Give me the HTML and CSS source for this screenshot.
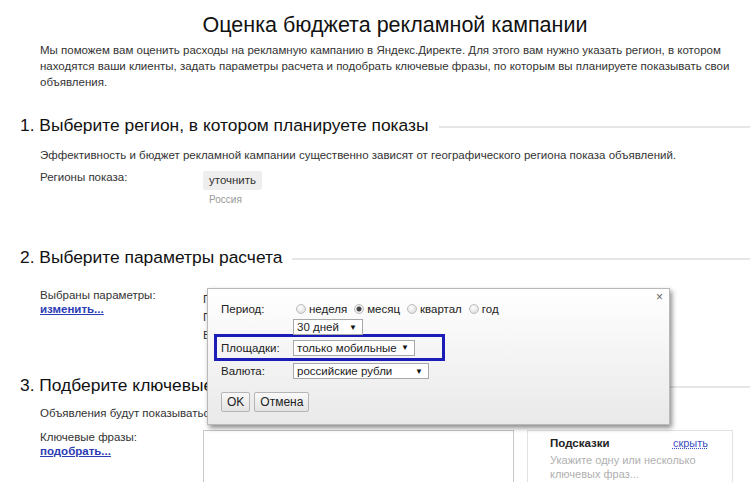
FILE: index.html
```html
<!DOCTYPE html>
<html lang="ru">
<head>
<meta charset="utf-8">
<title>Оценка бюджета рекламной кампании</title>
<link rel="stylesheet" href="styles.css">
</head>
<body>
<div class="page">
  <h1 class="title">Оценка бюджета рекламной кампании</h1>
  <p class="intro">Мы поможем вам оценить расходы на рекламную кампанию в Яндекс.Директе. Для этого вам нужно указать регион, в котором<br>находятся ваши клиенты, задать параметры расчета и подобрать ключевые фразы, по которым вы планируете показывать свои<br>объявления.</p>

  <h2 class="sec s1">1. Выберите регион, в котором планируете показы</h2>
  <p class="txt t1">Эффективность и бюджет рекламной кампании существенно зависят от географического региона показа объявлений.</p>
  <div class="row regions">
    <div class="lbl">Регионы показа:</div>
    <div class="val">
      <span class="btn-gray">уточнить</span>
      <div class="country">Россия</div>
    </div>
  </div>

  <h2 class="sec s2">2. Выберите параметры расчета</h2>
  <div class="row params">
    <div class="lbl">Выбраны параметры:<br><a class="link" href="#">изменить...</a></div>
    <div class="val plist">
      <div>Период: месяц</div>
      <div>Площадки: только мобильные</div>
      <div>Валюта: российские рубли</div>
    </div>
  </div>

  <h2 class="sec s3">3. Подберите ключевые фразы</h2>
  <p class="txt t3">Объявления будут показываться по ключевым фразам, которые вы укажете.</p>
  <div class="row kw">
    <div class="lbl">Ключевые фразы:<br><a class="link" href="#">подобрать...</a></div>
    <div class="val kwval">
      <div class="area"></div>
      <div class="hints">
        <div class="hints-head"><b>Подсказки</b><a class="hide" href="#">скрыть</a></div>
        <div class="hints-text">Укажите одну или несколько<br>ключевых фраз...</div>
      </div>
    </div>
  </div>

  <div class="dialog">
    <span class="close">×</span>
    <div class="drow period">
      <span class="dlbl">Период:</span>
      <span class="radios">
        <span class="radio"></span><span class="rt">неделя</span>
        <span class="radio on"></span><span class="rt">месяц</span>
        <span class="radio"></span><span class="rt">квартал</span>
        <span class="radio"></span><span class="rt">год</span>
      </span>
    </div>
    <div class="drow sub">
      <span class="dlbl"></span>
      <span class="sel w70">30 дней<i>▼</i></span>
    </div>
    <div class="drow hl">
      <span class="dlbl">Площадки:</span>
      <span class="sel w122">только мобильные<i>▼</i></span>
    </div>
    <div class="drow cur">
      <span class="dlbl">Валюта:</span>
      <span class="sel w136">российские рубли<i>▼</i></span>
    </div>
    <div class="drow btns">
      <span class="dbtn">OK</span>
      <span class="dbtn">Отмена</span>
    </div>
  </div>
</div>
</body>
</html>
```

FILE: styles.css
```css
html, body {
  margin: 0;
  padding: 0;
  background: #fff;
}
body {
  width: 750px;
  height: 482px;
  overflow: hidden;
  font-family: Arial, "Liberation Sans", sans-serif;
  color: #222;
}
.page {
  position: relative;
  padding-left: 20px;
}
.title {
  margin: 0 0 0 20px;
  padding-top: 12px;
  font-size: 21.5px;
  line-height: 26px;
  font-weight: normal;
  text-align: center;
  color: #111;
}
.intro {
  margin: 4px 0 0 20px;
  font-size: 11.5px;
  line-height: 16px;
  color: #333;
  white-space: nowrap;
}
.sec {
  display: flex;
  align-items: center;
  margin: 0;
  font-size: 17.4px;
  line-height: 22px;
  font-weight: normal;
  color: #111;
  white-space: nowrap;
}
.sec::after {
  content: "";
  flex: 1;
  height: 0;
  border-top: 2px solid #e6e6e6;
  margin-left: 10px;
  margin-top: 3px;
}
.s1 { margin-top: 24px; }
.s2 { margin-top: 39px; }
.s3 { margin-top: 30px; }
.txt {
  margin: 11px 0 0 20px;
  font-size: 11.5px;
  line-height: 16px;
  color: #333;
  white-space: nowrap;
}
.t3 { margin-top: 9px; }
.row {
  display: flex;
  margin-left: 20px;
  font-size: 11.5px;
  color: #333;
}
.lbl {
  width: 163px;
  flex: none;
}
.regions { margin-top: 6px; line-height: 16px; }
.btn-gray {
  display: inline-block;
  margin-top: 2px;
  padding: 2px 6px;
  line-height: 15px;
  background: #eeeeee;
  border-radius: 2px;
  color: #333;
}
.country {
  margin: 3px 0 0 6px;
  font-size: 10px;
  line-height: 14px;
  color: #999;
}
.params {
  margin-top: 20px;
  line-height: 14px;
}
.link {
  color: #2a3bb5;
  font-weight: bold;
  text-decoration: underline;
}
.plist {
  line-height: 18px;
  margin-top: 2px;
  white-space: nowrap;
}
.kw {
  margin-top: 9px;
  line-height: 14px;
}
.kwval {
  display: flex;
  gap: 13px;
}
.area {
  width: 309px;
  height: 70px;
  border: 1px solid #c8c8c8;
  background: #fff;
}
.hints {
  width: 158px;
  height: 70px;
  border: 1px solid #e2e2e2;
  padding: 5px 24px 0 22px;
}
.hints-head {
  display: flex;
  justify-content: space-between;
  align-items: baseline;
  color: #222;
}
.hide {
  color: #3a4fc0;
  text-decoration: underline dotted;
  font-size: 11px;
}
.hints-text {
  margin-top: 3px;
  font-size: 11px;
  color: #b0b0b0;
  line-height: 14px;
  white-space: nowrap;
}

/* popup dialog */
.dialog {
  position: absolute;
  left: 207px;
  top: 288px;
  width: 448px;
  height: 123px;
  padding: 12px 0 0 13px;
  border: 1px solid #b9b9b9;
  background: linear-gradient(#ffffff, #e9e9e9);
  box-shadow: 2px 3px 5px rgba(0, 0, 0, 0.45);
  font-size: 11.5px;
  color: #222;
  white-space: nowrap;
}
.close {
  position: absolute;
  right: 6px;
  top: 1px;
  font-size: 12px;
  color: #666;
}
.drow {
  display: flex;
  align-items: center;
}
.dlbl {
  width: 72px;
  flex: none;
}
.period { height: 16px; }
.radios {
  display: flex;
  align-items: center;
  margin-left: 3px;
}
.radio {
  width: 10px;
  height: 10px;
  border-radius: 50%;
  border: 1px solid #bdbdbd;
  background: radial-gradient(circle at 40% 35%, #ffffff, #d5d5d5);
  margin-right: 3px;
  box-sizing: border-box;
}
.radio.on {
  background: radial-gradient(circle, #444 0 2px, #f4f4f4 3px, #d6d6d6);
}
.rt { margin-right: 7px; }
.sub { margin-top: 2px; }
.sel {
  display: inline-flex;
  justify-content: space-between;
  align-items: center;
  box-sizing: border-box;
  height: 16px;
  padding: 0 5px 0 3px;
  border: 1px solid #a8a8a8;
  background: #fff;
  color: #222;
}
.sel i {
  font-style: normal;
  font-size: 8px;
  color: #111;
}
.w70 { width: 70px; }
.w122 { width: 122px; }
.w136 { width: 136px; }
.hl {
  margin: -1px 0 0 -7px;
  width: 231px;
  height: 27px;
  box-sizing: border-box;
  border: 3px solid #1c1cb8;
  padding-left: 4px;
}
.cur { margin-top: 2px; }
.btns {
  margin-top: 13px;
  gap: 4px;
}
.dbtn {
  display: inline-block;
  height: 18px;
  line-height: 18px;
  padding: 0 5px;
  border: 1px solid #b5b5b5;
  border-radius: 2px;
  background: linear-gradient(#f9f9f9, #e3e3e3);
  font-size: 12px;
  color: #222;
}
```
